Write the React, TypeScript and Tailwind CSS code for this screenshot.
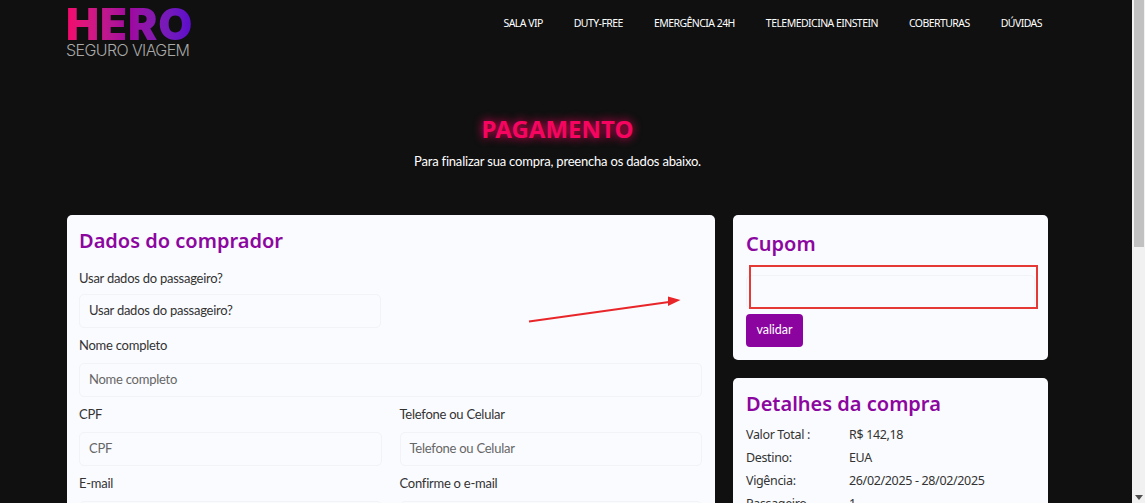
const navItems = ["SALA VIP", "DUTY-FREE", "EMERGÊNCIA 24H", "TELEMEDICINA EINSTEIN", "COBERTURAS", "DÚVIDAS"];

const details = [
  ["Valor Total :", "R$ 142,18"],
  ["Destino:", "EUA"],
  ["Vigência:", "26/02/2025 - 28/02/2025"],
  ["Passageiro", "1"],
];

function Field({ label, filled, tight }: { label: string; filled?: boolean; tight?: boolean }) {
  return (
    <div className="min-w-0 flex-1">
      <label className="block h-[21px] text-[13px] leading-[21px] tracking-[-0.25px] text-[#333]">{label}</label>
      <div
        className={`flex h-[34px] items-center rounded-[5px] border border-[#f1f3f7] bg-[#fafbfe] pl-[9px] text-[13px] tracking-[-0.25px] ${
          filled ? "text-[#333]" : "text-[#666]"
        } ${tight ? "mt-[5px]" : "mt-[7px]"}`}
      >
        {label}
      </div>
    </div>
  );
}

export default function App() {
  return (
    <div className="flex h-[503px] w-[1145px] overflow-hidden bg-[#101010] font-['Lato',sans-serif]">
      <main className="w-[1132px] shrink-0">
        <header className="flex h-[62px] items-start justify-between pr-[90px] pl-[66px]">
          <div className="pt-[5px]">
            <div className="h-[38px] bg-gradient-to-r from-[#f5056a] via-[#a0059f] to-[#5a08cc] bg-clip-text font-['Inter',sans-serif] text-[44px] leading-[38px] font-black tracking-[1px] text-transparent">
              HERO
            </div>
            <div className="font-['Inter',sans-serif] text-[16px] leading-[14px] font-light tracking-[-0.6px] text-[#a8a8a8]">
              SEGURO VIAGEM
            </div>
          </div>
          <nav className="flex gap-[31px] pt-[16px] font-['Noto_Sans',sans-serif]">
            {navItems.map((item) => (
              <a key={item} className="text-[10.5px] leading-[14px] tracking-[-0.55px] text-white">
                {item}
              </a>
            ))}
          </nav>
        </header>

        <section className="pt-[54px] pr-[17px] text-center">
          <h1 className="font-['Noto_Sans',sans-serif] text-[24px] leading-[26px] font-bold text-[#f5055f] [text-shadow:0_0_10px_#f5055f]">
            PAGAMENTO
          </h1>
          <p className="mt-[10px] text-[13px] leading-[18px] tracking-[-0.2px] text-white">Para finalizar sua compra, preencha os dados abaixo.</p>
        </section>

        <div className="mt-[45px] flex items-start gap-[18px] pl-[67px]">
          <div className="relative h-[400px] w-[648px] shrink-0 rounded-[5px] bg-[#fafbfe] pt-[12px] pr-[13px] pl-[12px]">
            <h2 className="font-['Noto_Sans',sans-serif] text-[20px] leading-[28px] font-semibold text-[#8c07a0]">Dados do comprador</h2>
            <div className="mt-[13px] flex w-[302px]">
              <Field label="Usar dados do passageiro?" filled tight />
            </div>
            <svg className="absolute top-[80px] left-[461px]" width="156" height="28" viewBox="0 0 156 28">
              <path d="M1 26.5 L141 7" stroke="#e8262a" strokeWidth="2" fill="none" />
              <path d="M140 1.5 L152.5 5 L140 11 Z" fill="#e8262a" />
            </svg>
            <div className="mt-[7px] flex">
              <Field label="Nome completo" />
            </div>
            <div className="mt-[7px] flex gap-[18px]">
              <Field label="CPF" />
              <Field label="Telefone ou Celular" />
            </div>
            <div className="mt-[7px] flex gap-[18px]">
              <Field label="E-mail" />
              <Field label="Confirme o e-mail" />
            </div>
          </div>

          <div className="flex w-[315px] shrink-0 flex-col gap-[18px]">
            <div className="h-[145px] rounded-[5px] bg-[#fafbfe] px-[13px] pt-[15px]">
              <h2 className="font-['Noto_Sans',sans-serif] text-[20px] leading-[28px] font-semibold text-[#8c07a0]">Cupom</h2>
              <div className="relative mt-[7px] flex h-[44px] items-end">
                <div className="h-[34px] w-full rounded-[5px] border border-[#f1f3f7] bg-[#fafbfe]" />
                <div className="absolute top-0 -right-[3px] left-[3px] h-[44px] border-2 border-[#e53935]" />
              </div>
              <button className="mt-[5px] h-[33px] w-[57px] rounded-[4px] bg-[#8c04a0] text-[12.5px] text-white">validar</button>
            </div>
            <div className="h-[200px] rounded-[5px] bg-[#fafbfe] px-[13px] pt-[12px]">
              <h2 className="font-['Noto_Sans',sans-serif] text-[20px] leading-[28px] font-semibold text-[#8c07a0]">Detalhes da compra</h2>
              <div className="mt-[6px] font-['Noto_Sans',sans-serif]">
                {details.map(([k, v]) => (
                  <div key={k} className="flex h-[23px] items-center text-[12.5px] tracking-[-0.35px] text-[#333]">
                    <span className="w-[103px]">{k}</span>
                    <span>{v}</span>
                  </div>
                ))}
              </div>
            </div>
          </div>
        </div>
      </main>
      <div className="flex w-[13px] shrink-0 flex-col bg-[#f1f1f1] pr-[1px] pl-[2px]">
        <div className="h-[247px] bg-[#c1c1c1]" />
        <svg className="mt-auto mb-[3px] ml-[1px]" width="8" height="5" viewBox="0 0 8 5">
          <path d="M0 0 L8 0 L4 5 Z" fill="#505050" />
        </svg>
      </div>
    </div>
  );
}
